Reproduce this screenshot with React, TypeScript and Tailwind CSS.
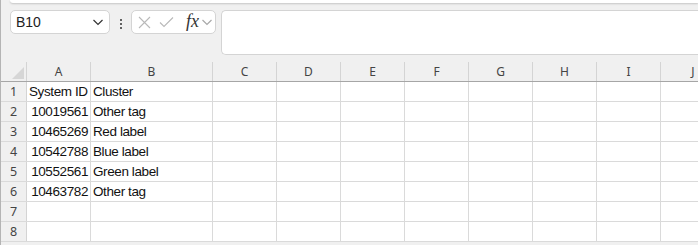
import React from "react";

const cols = ["A", "B", "C", "D", "E", "F", "G", "H", "I", "J"];
const widths = ["w-[64px]", "w-[122px]", "w-[64px]", "w-[64px]", "w-[64px]", "w-[64px]", "w-[64px]", "w-[64px]", "w-[64px]", "w-[64px]"];

const rows: [string, string][] = [
  ["System ID", "Cluster"],
  ["10019561", "Other tag"],
  ["10465269", "Red label"],
  ["10542788", "Blue label"],
  ["10552561", "Green label"],
  ["10463782", "Other tag"],
  ["", ""],
  ["", ""],
];

function Chevron({ className = "" }: { className?: string }) {
  return (
    <svg width="12" height="8" viewBox="0 0 12 8" className={className}>
      <path d="M1.5 2 L6 6.5 L10.5 2" fill="none" stroke="currentColor" strokeWidth="1.2" />
    </svg>
  );
}

export default function App() {
  return (
    <div className="w-[698px] h-[245px] overflow-hidden bg-[#f0f0f0] border-l border-[#b4b4b4] font-['Noto_Sans',sans-serif]">
      {/* ribbon edge */}
      <div className="ml-[9px] h-[3px] bg-white rounded-bl-md shadow-[0_1px_2px_rgba(0,0,0,0.18)]" />

      {/* formula bar */}
      <div className="flex items-start ml-[9px] mt-[7px] h-[44px]">
        <div className="flex items-center justify-between w-[100px] h-[24px] bg-white border border-[#d4d4d4] rounded-[5px] pl-[5px] pr-[5px]">
          <span className="text-[14px] text-[#222] font-['Liberation_Sans',sans-serif]">B10</span>
          <Chevron className="text-[#333]" />
        </div>
        <div className="flex flex-col gap-[2px] w-[21px] items-center pt-[9px]">
          <span className="block w-[2px] h-[2px] bg-[#333] rounded-full" />
          <span className="block w-[2px] h-[2px] bg-[#333] rounded-full" />
          <span className="block w-[2px] h-[2px] bg-[#333] rounded-full" />
        </div>
        <div className="flex items-center w-[85px] h-[24px] bg-white border border-[#d4d4d4] rounded-[5px] pl-[6px] gap-[8px]">
          <svg width="13" height="13" viewBox="0 0 13 13">
            <path d="M1 1 L12 12 M12 1 L1 12" stroke="#b9b9b9" strokeWidth="1.1" fill="none" />
          </svg>
          <svg width="15" height="12" viewBox="0 0 15 12">
            <path d="M1 6.5 L5 10.5 L14 1.5" stroke="#b9b9b9" strokeWidth="1.1" fill="none" />
          </svg>
          <div className="flex items-center ml-[4px]">
            <span className="italic text-[18px] leading-none text-[#333] font-['Liberation_Serif',serif] -mt-[2px]">fx</span>
            <Chevron className="text-[#a8a8a8] ml-[2px]" />
          </div>
        </div>
        <div className="ml-[5px] flex-1 h-[45px] bg-white border border-[#d4d4d4] rounded-l-[5px] border-r-0" />
      </div>

      {/* grid */}
      <div className="mt-[8px]">
        <div className="flex h-[20px] border-b border-[#a6a6a6]">
          <div className="relative w-[26px] shrink-0 border-r border-[#d4d4d4]">
            <svg width="12" height="12" viewBox="0 0 12 12" className="absolute left-[11px] top-[5px]">
              <path d="M12 0 L12 12 L0 12 Z" fill="#d6d6d6" />
            </svg>
          </div>
          {cols.map((c, i) => (
            <div
              key={c}
              className={`${widths[i]} shrink-0 ${i === 9 ? "" : "border-r border-[#d4d4d4]"} flex items-center justify-center text-[12px] text-[#444] pt-[1px]`}
            >
              {c}
            </div>
          ))}
        </div>
        {rows.map((r, ri) => (
          <div key={ri} className="flex h-[20px] border-b border-[#dadada]">
            <div className="w-[26px] shrink-0 border-r border-[#d4d4d4] flex items-center justify-center text-[12.5px] text-[#444] pt-[1px]">
              {ri + 1}
            </div>
            {cols.map((c, i) => {
              let content = "";
              let align = "justify-start";
              if (i === 0) {
                content = r[0];
                align = ri === 0 ? "justify-start" : "justify-end";
              } else if (i === 1) {
                content = r[1];
              }
              return (
                <div
                  key={c}
                  className={`${widths[i]} shrink-0 ${i === 9 ? "" : "border-r border-[#dadada]"} bg-white flex items-end ${align} pl-[2px] pr-[2px] text-[13.5px] tracking-[-0.4px] leading-[18px] text-[#111] font-['Liberation_Sans',sans-serif] whitespace-nowrap overflow-hidden`}
                >
                  {content}
                </div>
              );
            })}
          </div>
        ))}
      </div>
    </div>
  );
}
